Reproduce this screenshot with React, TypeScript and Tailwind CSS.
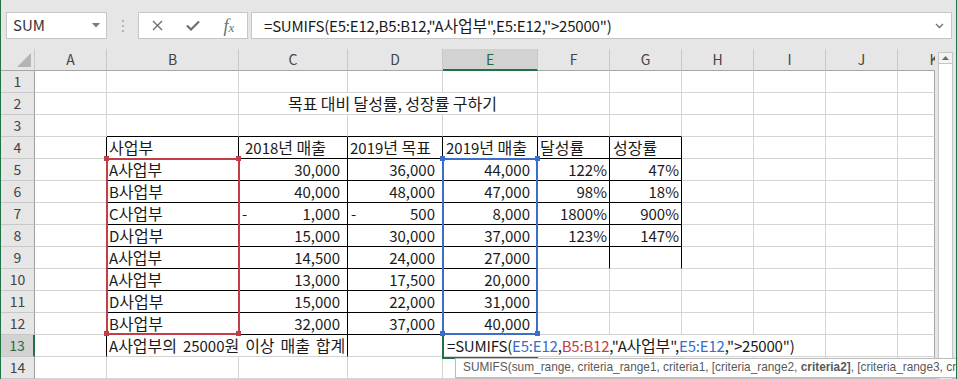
import type { ReactNode } from 'react';

const LETTERS = ['A', 'B', 'C', 'D', 'E', 'F', 'G', 'H', 'I', 'J', 'K'];
const UNITS = ['A', 'B', 'C', 'D', 'A', 'A', 'D', 'B'];
const SALES18 = ['30,000', '40,000', '1,000', '15,000', '14,500', '13,000', '15,000', '32,000'];
const GOAL19 = ['36,000', '48,000', '500', '30,000', '24,000', '17,500', '22,000', '37,000'];
const SALES19 = ['44,000', '47,000', '8,000', '37,000', '27,000', '20,000', '31,000', '40,000'];
const ACHIEVE = ['122%', '98%', '1800%', '123%'];
const GROWTH = ['47%', '18%', '900%', '147%'];

const SPAN: Record<number, string> = { 1: '', 2: 'col-span-2', 3: 'col-span-3', 5: 'col-span-5' };

type Spec = { c: number; span: number; node?: ReactNode; cls?: string };

// Hangul renders a bit larger than the latin glyphs in the original sheet font
function Ko({ s }: { s: string }) {
  return (
    <span>
      {s.split(/([\uAC00-\uD7A3]+)/).map((p, i) =>
        i % 2 ? (
          <span key={i} className="text-[16px] leading-[21px]">
            {p}
          </span>
        ) : (
          p
        )
      )}
    </span>
  );
}

function borderCls(r: number, c: number, last: number) {
  let right = 'border-r-[#d4d4d4]';
  if (last === 10) right = 'border-r-[#a6a6a6]';
  else if (r >= 4 && r <= 12 && last <= 4) right = 'border-r-black';
  else if (r >= 4 && r <= 9 && (last === 5 || last === 6)) right = 'border-r-black';
  else if (r === 13 && (last === 0 || last === 2)) right = 'border-r-black';

  let bottom = 'border-b-[#d4d4d4]';
  if (r >= 3 && r <= 12 && c >= 1 && last <= 4) bottom = 'border-b-black';
  else if (r >= 3 && r <= 8 && c >= 5 && last <= 6) bottom = 'border-b-black';
  return `border-r border-b ${right} ${bottom}`;
}

function Acc({ v, neg }: { v: string; neg?: boolean }) {
  return (
    <div className="flex w-full justify-between pl-[3px] pr-[7px]">
      <span>{neg ? '-' : ''}</span>
      <span>{v}</span>
    </div>
  );
}

function EditFormula() {
  return (
    <span className="tracking-[-0.2px]">
      =SUMIFS(<span className="text-[#3a6cc9]">E5:E12</span>,<span className="text-[#c63a44]">B5:B12</span>,"A
      <span className="text-[16px] leading-[21px]">사업부</span>",<span className="text-[#3a6cc9]">E5:E12</span>
      {',">25000")'}
    </span>
  );
}

function specs(r: number): Spec[] {
  const out: Spec[] = [];
  const put = (c: number, node?: ReactNode, cls = '', span = 1) => out.push({ c, span, node, cls });

  if (r === 2) {
    put(0);
    put(1);
    put(2, <Ko s="목표 대비 달성률, 성장률 구하기" />, 'justify-center pl-[9px]', 3);
    for (let c = 5; c <= 10; c++) put(c);
    return out;
  }
  if (r === 13) {
    put(0);
    put(1, <Ko s="A사업부의 25000원 이상 매출 합계" />, 'pl-[2px] [word-spacing:2.5px]', 2);
    put(3);
    put(4, <EditFormula />, 'pl-[4px]', 5);
    put(9);
    put(10);
    return out;
  }
  if (r === 4) {
    put(0);
    put(1, <Ko s="사업부" />, 'pl-[2px]');
    put(2, <Ko s="2018년 매출" />, 'pl-[6px]');
    put(3, <Ko s="2019년 목표" />, 'pl-[2px]');
    put(4, <Ko s="2019년 매출" />, 'pl-[3px]');
    put(5, <Ko s="달성률" />, 'pl-[2px]');
    put(6, <Ko s="성장률" />, 'pl-[3px]');
    for (let c = 7; c <= 10; c++) put(c);
    return out;
  }
  if (r >= 5 && r <= 12) {
    const i = r - 5;
    put(0);
    put(1, <Ko s={`${UNITS[i]}사업부`} />, 'pl-[2px] bg-[#f9e5e6]');
    put(2, <Acc v={SALES18[i]} neg={i === 2} />);
    put(3, <Acc v={GOAL19[i]} neg={i === 2} />);
    put(4, <Acc v={SALES19[i]} />, 'bg-[#d9e1f2]');
    put(5, ACHIEVE[i], 'justify-end pr-[2px]');
    put(6, GROWTH[i], 'justify-end pr-[2px]');
    for (let c = 7; c <= 10; c++) put(c);
    return out;
  }
  for (let c = 0; c <= 10; c++) put(c);
  return out;
}

function Sheet() {
  const rows: ReactNode[] = [];
  for (let r = 1; r <= 14; r++) {
    const active = r === 13;
    rows.push(
      <div
        key={`h${r}`}
        className={`h-[22px] flex items-center justify-center text-[14px] border-b border-b-[#c8c8c8] ${
          active
            ? 'bg-[#d2d2d2] text-[#1e6b41] border-r-2 border-r-[#217346]'
            : 'bg-[#e6e6e6] text-[#444] border-r border-r-[#9e9e9e]'
        }`}
      >
        {r}
      </div>
    );
    specs(r).forEach((s) => {
      const last = s.c + s.span - 1;
      rows.push(
        <div
          key={`${r}-${s.c}`}
          className={`h-[22px] flex items-center whitespace-nowrap text-[15px] leading-[21px] text-[#1a1a1a] bg-white ${borderCls(
            r,
            s.c,
            last
          )} ${SPAN[s.span]} ${s.cls ?? ''}`}
        >
          {s.node}
        </div>
      );
    });
  }

  return (
    <div className="grid w-[934px] grid-cols-[34px_72px_132px_109px_95px_95px_72px_72px_72px_72px_72px_37px] bg-white">
      {/* column headers */}
      <div className="h-[22px] relative bg-[#e6e6e6] border-r border-b border-r-[#c8c8c8] border-b-[#a6a6a6]">
        <svg className="absolute right-[3px] bottom-[3px]" width="14" height="14" viewBox="0 0 14 14">
          <polygon points="14,0 14,14 0,14" fill="#b4b4b4" />
        </svg>
      </div>
      {LETTERS.map((l) => {
        const sel = l === 'E';
        const isK = l === 'K';
        return (
          <div
            key={l}
            className={`h-[22px] flex items-center justify-center overflow-hidden text-[14px] ${
              sel
                ? 'bg-[#d2d2d2] text-[#1e6b41] border-b-2 border-b-[#217346] border-r border-r-[#c8c8c8]'
                : isK
                ? 'bg-[#e6e6e6] text-[#444] border-b border-b-[#a6a6a6]'
                : 'bg-[#e6e6e6] text-[#444] border-b border-b-[#a6a6a6] border-r border-r-[#c8c8c8]'
            }`}
          >
            {isK ? <div className="w-[72px] shrink-0 ml-[35px] text-center">K</div> : l}
          </div>
        );
      })}
      {rows}
    </div>
  );
}

export default function App() {
  return (
    <div className="relative w-[957px] h-[379px] overflow-hidden bg-[#e6e6e6] border-x border-x-[#217346] font-['Noto_Sans_CJK_KR',sans-serif] text-[#222]">
      {/* formula bar */}
      <div className="h-[49px] flex items-start pt-[12px]">
        <div className="ml-[5px] w-[101px] h-[27px] bg-white border border-[#c6c6c6] flex items-center justify-between pl-[6px] pr-[6px] text-[15px] text-[#333]">
          <span>SUM</span>
          <svg width="8" height="5" viewBox="0 0 8 5">
            <polygon points="0,0 8,0 4,4.5" fill="#7a7a7a" />
          </svg>
        </div>
        <div className="w-[31px] h-[27px] flex flex-col items-center justify-center gap-[3px]">
          <span className="w-[2px] h-[2px] bg-[#b4b4b4]" />
          <span className="w-[2px] h-[2px] bg-[#b4b4b4]" />
          <span className="w-[2px] h-[2px] bg-[#b4b4b4]" />
        </div>
        <div className="w-[110px] h-[27px] bg-white border border-[#c6c6c6] flex">
          <div className="w-[36px] flex items-center justify-center">
            <svg width="11" height="11" viewBox="0 0 11 11">
              <path d="M1 1 L10 10 M10 1 L1 10" stroke="#6e6e6e" strokeWidth="1.4" />
            </svg>
          </div>
          <div className="w-[36px] flex items-center justify-center">
            <svg width="14" height="11" viewBox="0 0 14 11">
              <path d="M1 5.5 L5 9.5 L13 1.5" stroke="#6e6e6e" strokeWidth="2.2" fill="none" />
            </svg>
          </div>
          <div className="w-[36px] flex items-center justify-center text-[#6e6e6e] italic font-['Liberation_Serif',serif]">
            <span className="text-[18px] leading-none">f</span>
            <span className="text-[13px] leading-none mt-[4px]">x</span>
          </div>
        </div>
        <div className="ml-[3px] w-[701px] h-[27px] bg-white border border-[#c6c6c6] flex items-center justify-between pl-[12px] pr-[7px] text-[15px] text-[#1a1a1a] whitespace-nowrap">
          <span className="tracking-[-0.2px]">
            =SUMIFS(E5:E12,B5:B12,"A<span className="text-[16px]">사업부</span>",E5:E12,"{'>'}25000")
          </span>
          <svg width="9" height="6" viewBox="0 0 9 6">
            <path d="M1 1 L4.5 4.5 L8 1" stroke="#6e6e6e" strokeWidth="1.3" fill="none" />
          </svg>
        </div>
      </div>

      {/* grid + vertical scrollbar */}
      <div className="flex">
        <Sheet />
        <div className="w-[21px] h-[330px] bg-[#e6e6e6] pt-[3px] pl-[3px]">
          <div className="w-[15px] h-full flex flex-col border-x border-x-[#c6c6c6] bg-white">
            <div className="h-[12px] border-t border-b border-[#c6c6c6] flex items-center justify-center bg-[#f3f3f3]">
              <svg width="7" height="4" viewBox="0 0 7 4">
                <polygon points="0,4 7,4 3.5,0" fill="#6b6b6b" />
              </svg>
            </div>
            <div className="flex-1" />
          </div>
        </div>
      </div>

      {/* active cell (green), then reference ranges */}
      <div className="absolute left-[441px] top-[333px] w-[96px] h-[26px] border-l-2 border-t-2 border-b-2 border-[#217346]" />
      <div className="absolute left-[105px] top-[158px] w-[134px] h-[177px] border-2 border-[#c23f4a]" />
      <div className="absolute left-[103px] top-[156px] w-[5px] h-[5px] bg-[#c23f4a]" />
      <div className="absolute left-[235px] top-[156px] w-[5px] h-[5px] bg-[#c23f4a]" />
      <div className="absolute left-[103px] top-[331px] w-[5px] h-[5px] bg-[#c23f4a]" />
      <div className="absolute left-[235px] top-[331px] w-[5px] h-[5px] bg-[#c23f4a]" />
      <div className="absolute left-[441px] top-[158px] w-[96px] h-[177px] border-2 border-[#3c6ec8]" />
      <div className="absolute left-[439px] top-[156px] w-[5px] h-[5px] bg-[#3c6ec8]" />
      <div className="absolute left-[534px] top-[156px] w-[5px] h-[5px] bg-[#3c6ec8]" />
      <div className="absolute left-[439px] top-[331px] w-[5px] h-[5px] bg-[#3c6ec8]" />
      <div className="absolute left-[534px] top-[331px] w-[5px] h-[5px] bg-[#3c6ec8]" />

      {/* function argument tooltip */}
      <div className="absolute left-[454px] top-[358px] w-[600px] h-[20px] bg-white border border-[#bcbcbc] shadow-[1px_1px_2px_rgba(0,0,0,0.15)] flex items-center pl-[7px] whitespace-nowrap font-['Liberation_Sans',sans-serif] text-[11.85px] text-[#595959]">
        <span>
          SUMIFS(sum_range, criteria_range1, criteria1, [criteria_range2,{' '}
          <b className="font-bold">criteria2]</b>, [criteria_range3, criteria3], ...)
        </span>
      </div>
    </div>
  );
}
